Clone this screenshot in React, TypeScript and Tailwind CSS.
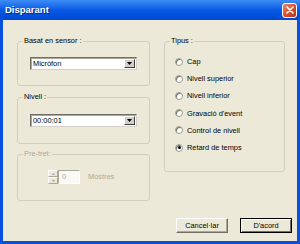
import React from 'react';

const font = { fontFamily: '"Liberation Sans", Arial, sans-serif' };

const Select: React.FC<{ value: string }> = ({ value }) => (
  <div className="h-[13px] w-[107px] flex items-center bg-white border border-t-[#716F64] border-l-[#716F64] border-b-[#D4D0C8] border-r-[#D4D0C8] shadow-[inset_1px_1px_0_#ACA899]">
    <span className="flex-1 pl-[2px] text-[7.4px] leading-[9px] text-black">{value}</span>
    <div className="w-[11px] h-[9px] mr-[1px] flex items-center justify-center bg-[#D4D0C8] border border-t-white border-l-white border-b-[#404040] border-r-[#404040]">
      <svg width="5" height="3" viewBox="0 0 5 3">
        <path d="M0 0h5L2.5 3z" fill="#000" />
      </svg>
    </div>
  </div>
);

const Radio: React.FC<{ label: string; checked?: boolean }> = ({ label, checked }) => (
  <div className="h-[17.2px] flex items-center gap-[4px]">
    <div className="w-[8px] h-[8px] rounded-full bg-white border border-[#9D9B90] flex items-center justify-center shadow-[inset_1px_1px_0_#716F64]">
      {checked && <div className="w-[3px] h-[3px] rounded-full bg-black" />}
    </div>
    <span className="text-[7.4px] leading-[9px] text-black">{label}</span>
  </div>
);

const Group: React.FC<{ title: string; className: string; inner: string; disabled?: boolean; children: React.ReactNode }> = ({
  title,
  className,
  inner,
  disabled,
  children,
}) => (
  <fieldset className={`border border-[#D0D0BF] rounded-[3px] ${className}`}>
    <legend className={`ml-[5px] px-[1px] text-[7.4px] leading-[10px] ${disabled ? 'text-[#ACA899]' : 'text-black'}`}>
      {title}
    </legend>
    <div className={inner}>{children}</div>
  </fieldset>
);

export default function App() {
  const tipus = ['Cap', 'Nivell superior', 'Nivell inferior', "Gravació d'event", 'Control de nivell', 'Retard de temps'];

  return (
    <div className="w-[300px] h-[244px] flex flex-col bg-[#0850DD]" style={font}>
      {/* title bar */}
      <div className="h-[20px] flex items-center justify-between pl-[5px] pr-[3px] bg-gradient-to-b from-[#3D8CF6] via-[#0659E6] to-[#0047D0]">
        <span className="text-white font-bold text-[9.5px] leading-[10px] [text-shadow:1px_1px_0_#0A2A80]">Disparant</span>
        <div className="w-[15px] h-[15px] rounded-[3px] border border-white flex items-center justify-center bg-gradient-to-br from-[#E98A6C] via-[#D9522E] to-[#B83418]">
          <svg width="8" height="8" viewBox="0 0 8 8">
            <path d="M1 1L7 7M7 1L1 7" stroke="#fff" strokeWidth="1.6" strokeLinecap="round" />
          </svg>
        </div>
      </div>

      {/* body */}
      <div className="flex-1 mx-[3px] mb-[3px] bg-[#ECE9D8] flex flex-col">
        <div className="flex pt-[16px] pl-[14px] gap-[14px]">
          <div className="w-[133px] flex flex-col gap-[6px]">
            <Group title="Basat en sensor :" className="h-[50px]" inner="pl-[12px] pt-[11px]">
              <Select value="Micròfon" />
            </Group>
            <Group title="Nivell :" className="h-[52px]" inner="pl-[12px] pt-[12px]">
              <Select value="00:00:01" />
            </Group>
            <Group title="Pre-tret:" disabled className="h-[52px] mt-[-1px]" inner="pl-[30px] pt-[11px]">
              <div className="flex items-center">
                <div className="w-[10px] h-[14px] flex flex-col">
                  <div className="flex-1 flex items-center justify-center bg-[#ECE9D8] border border-t-white border-l-white border-b-[#ACA899] border-r-[#ACA899]">
                    <svg width="3" height="2" viewBox="0 0 3 2"><path d="M0 2h3L1.5 0z" fill="#ACA899" /></svg>
                  </div>
                  <div className="flex-1 flex items-center justify-center bg-[#ECE9D8] border border-t-white border-l-white border-b-[#ACA899] border-r-[#ACA899]">
                    <svg width="3" height="2" viewBox="0 0 3 2"><path d="M0 0h3L1.5 2z" fill="#ACA899" /></svg>
                  </div>
                </div>
                <div className="w-[22px] h-[14px] flex items-center pl-[3px] bg-[#FAF9F5] border border-t-[#ACA899] border-l-[#ACA899] border-b-white border-r-white text-[7.4px] text-[#ACA899]">
                  0
                </div>
                <span className="ml-[8px] text-[7.4px] text-[#ACA899]">Mostres</span>
              </div>
            </Group>
          </div>

          <Group title="Tipus :" className="w-[121px] h-[136px]" inner="pl-[10px] pt-[7px]">
            {tipus.map((t, i) => (
              <Radio key={t} label={t} checked={i === tipus.length - 1} />
            ))}
          </Group>
        </div>

        <div className="mt-auto flex justify-end gap-[12px] pr-[5px] pb-[8px]">
          <button className="w-[52px] h-[15px] bg-[#ECE9D8] border border-t-white border-l-white border-b-[#716F64] border-r-[#716F64] shadow-[inset_-1px_-1px_0_#ACA899] text-[7.4px] text-black">
            Cancel·lar
          </button>
          <button className="w-[52px] h-[15px] bg-[#ECE9D8] border border-black shadow-[inset_1px_1px_0_#fff,inset_-1px_-1px_0_#716F64] text-[7.4px] text-black">
            D'acord
          </button>
        </div>
      </div>
    </div>
  );
}
